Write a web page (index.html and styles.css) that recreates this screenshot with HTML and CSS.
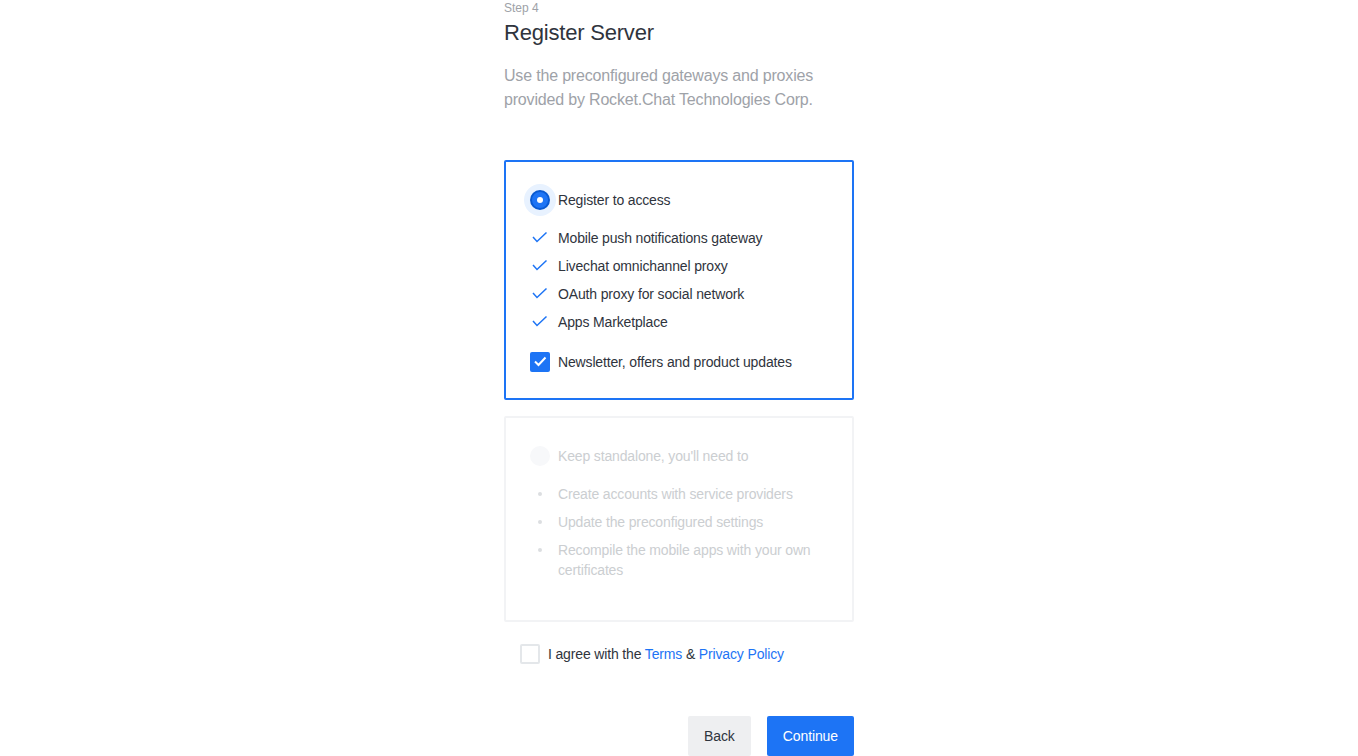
FILE: index.html
```html
<!DOCTYPE html>
<html lang="en">
<head>
<meta charset="utf-8">
<title>Register Server</title>
<link rel="stylesheet" href="styles.css">
</head>
<body>
<main class="page">
  <div class="wizard">
    <div class="step">Step 4</div>
    <h1 class="title">Register Server</h1>
    <p class="desc">Use the preconfigured gateways and proxies provided by Rocket.Chat Technologies Corp.</p>

    <div class="option option--active">
      <div class="option-head">
        <span class="radio radio--on"><span class="radio-dot"></span></span>
        <span>Register to access</span>
      </div>
      <ul class="list">
        <li class="item"><span class="mark"><svg width="20" height="20" viewBox="0 0 20 20"><path d="M3 9 L7 13.5 L16.5 4.5" fill="none" stroke="#1d74f5" stroke-width="1.5"/></svg></span><span>Mobile push notifications gateway</span></li>
        <li class="item"><span class="mark"><svg width="20" height="20" viewBox="0 0 20 20"><path d="M3 9 L7 13.5 L16.5 4.5" fill="none" stroke="#1d74f5" stroke-width="1.5"/></svg></span><span>Livechat omnichannel proxy</span></li>
        <li class="item"><span class="mark"><svg width="20" height="20" viewBox="0 0 20 20"><path d="M3 9 L7 13.5 L16.5 4.5" fill="none" stroke="#1d74f5" stroke-width="1.5"/></svg></span><span>OAuth proxy for social network</span></li>
        <li class="item"><span class="mark"><svg width="20" height="20" viewBox="0 0 20 20"><path d="M3 9 L7 13.5 L16.5 4.5" fill="none" stroke="#1d74f5" stroke-width="1.5"/></svg></span><span>Apps Marketplace</span></li>
      </ul>
      <div class="newsletter">
        <span class="checkbox checkbox--on"><svg width="20" height="20" viewBox="0 0 20 20"><path d="M5 9.5 L8.5 13 L15.5 5.5" fill="none" stroke="#ffffff" stroke-width="2"/></svg></span>
        <span>Newsletter, offers and product updates</span>
      </div>
    </div>

    <div class="option option--off">
      <div class="option-head">
        <span class="radio radio--off"></span>
        <span>Keep standalone, you'll need to</span>
      </div>
      <ul class="list">
        <li class="item"><span class="mark"><span class="bullet"></span></span><span>Create accounts with service providers</span></li>
        <li class="item"><span class="mark"><span class="bullet"></span></span><span>Update the preconfigured settings</span></li>
        <li class="item"><span class="mark"><span class="bullet"></span></span><span>Recompile the mobile apps with your own certificates</span></li>
      </ul>
    </div>

    <div class="agree">
      <span class="checkbox checkbox--empty"></span>
      <span>I agree with the <a class="link" href="#">Terms</a> &amp; <a class="link" href="#">Privacy Policy</a></span>
    </div>

    <div class="actions">
      <button class="btn btn--secondary">Back</button>
      <button class="btn btn--primary">Continue</button>
    </div>
  </div>
</main>
</body>
</html>
```

FILE: styles.css
```css
* { box-sizing: border-box; }

html, body {
  margin: 0;
  padding: 0;
  background: #ffffff;
}

body {
  font-family: "Liberation Sans", Arial, sans-serif;
  color: #2f343d;
}

.page {
  display: flex;
  justify-content: center;
  padding-bottom: 40px;
}

.wizard {
  width: 350px;
  display: flex;
  flex-direction: column;
}

.step {
  font-size: 12px;
  line-height: 16px;
  color: #9ea2a8;
}

.title {
  margin: 1px 0 0;
  font-size: 22px;
  line-height: 32px;
  font-weight: 400;
  letter-spacing: -0.2px;
  color: #2f343d;
}

.desc {
  margin: 15px 0 0;
  font-size: 16px;
  line-height: 24px;
  letter-spacing: -0.18px;
  color: #9ea2a8;
}

.option {
  border: 2px solid #1d74f5;
  border-radius: 2px;
  padding: 28px 24px 26px;
  font-size: 14px;
  line-height: 20px;
  letter-spacing: -0.15px;
}

.option--active {
  margin-top: 48px;
}

.option--off {
  margin-top: 16px;
  border-color: #f2f3f5;
  padding-bottom: 40px;
  color: #cbced1;
}

.option-head {
  display: flex;
  align-items: center;
  gap: 8px;
  height: 20px;
}

.radio {
  position: relative;
  width: 20px;
  height: 20px;
  border-radius: 50%;
  flex: none;
}

.radio--on {
  background: #1d74f5;
  border: 2px solid #095ad2;
  box-shadow: 0 0 0 6px #e8f2ff;
  display: flex;
  align-items: center;
  justify-content: center;
}

.radio-dot {
  width: 6px;
  height: 6px;
  border-radius: 50%;
  background: #ffffff;
}

.radio--off {
  background: #f7f8fa;
}

.list {
  list-style: none;
  margin: 18px 0 0;
  padding: 0;
  display: flex;
  flex-direction: column;
  gap: 8px;
}

.item {
  display: flex;
  gap: 8px;
  align-items: flex-start;
}

.mark {
  width: 20px;
  height: 20px;
  flex: none;
  display: flex;
  align-items: center;
  justify-content: center;
}

.mark svg { display: block; }

.bullet {
  width: 4px;
  height: 4px;
  border-radius: 50%;
  background: #dcdee1;
}

.newsletter {
  margin-top: 20px;
  display: flex;
  align-items: center;
  gap: 8px;
}

.checkbox {
  width: 20px;
  height: 20px;
  border-radius: 2px;
  flex: none;
  display: block;
}

.checkbox svg { display: block; }

.checkbox--on {
  background: #1d74f5;
}

.checkbox--empty {
  border: 2px solid #e4e7ea;
}

.agree {
  margin-top: 22px;
  padding-left: 16px;
  display: flex;
  align-items: center;
  gap: 8px;
  font-size: 14px;
  line-height: 20px;
  letter-spacing: -0.15px;
  color: #2f343d;
}

.link {
  color: #1d74f5;
  text-decoration: none;
}

.actions {
  margin-top: 52px;
  display: flex;
  justify-content: flex-end;
  gap: 16px;
}

.btn {
  height: 40px;
  padding: 0 16px;
  border: 0;
  border-radius: 2px;
  font-family: "Liberation Sans", Arial, sans-serif;
  font-size: 14px;
  line-height: 40px;
  letter-spacing: -0.1px;
  cursor: pointer;
}

.btn--secondary {
  background: #eeeff1;
  color: #2f343d;
}

.btn--primary {
  background: #1d74f5;
  color: #ffffff;
}
```
